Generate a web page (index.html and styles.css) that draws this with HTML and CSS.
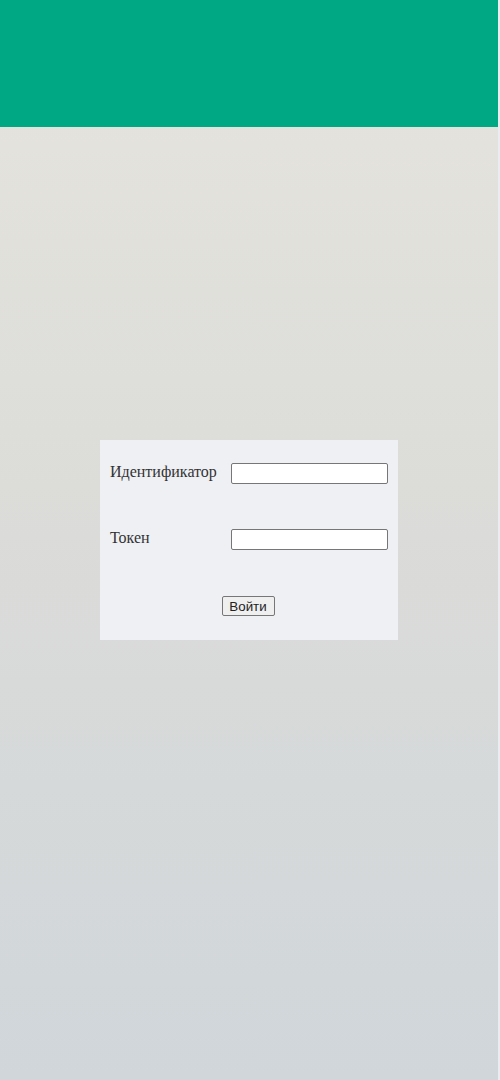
FILE: index.html
```html
<!DOCTYPE html>
<html lang="ru">
<head>
<meta charset="utf-8">
<title>Вход</title>
<link rel="stylesheet" href="styles.css">
</head>
<body>
<div class="page">
  <header class="topbar"></header>
  <main class="main">
    <form class="login">
      <div class="fields">
        <label class="label" for="ident">Идентификатор</label>
        <input class="input" id="ident" type="text">
        <label class="label" for="token">Токен</label>
        <input class="input" id="token" type="text">
      </div>
      <div class="actions">
        <button class="btn" type="button">Войти</button>
      </div>
    </form>
  </main>
</div>
</body>
</html>
```
FILE: styles.css
```css
html, body {
  margin: 0;
  padding: 0;
  height: 100%;
  background: #e9edf2;
}
body {
  font-family: "Liberation Serif", "Times New Roman", serif;
  font-size: 16px;
  color: #333;
}
.page {
  width: 498px;
  height: 1080px;
  display: flex;
  flex-direction: column;
  background: linear-gradient(to bottom, #e6e5de 0%, #dcdcd9 45%, #d0d6da 100%);
}
.topbar {
  height: 127px;
  flex: none;
  background: #00a884;
}
.main {
  flex: 1;
  display: flex;
  flex-direction: column;
  align-items: center;
  padding-top: 313px;
}
.login {
  width: 298px;
  box-sizing: border-box;
  padding: 23px 10px 24px 10px;
  background: #eff0f3;
}
.fields {
  display: grid;
  grid-template-columns: 121px 157px;
  row-gap: 45px;
  align-items: start;
}
.label {
  line-height: 18px;
}
.input {
  box-sizing: border-box;
  width: 157px;
  height: 21px;
  margin: 0;
  border: 1px solid #767676;
  border-radius: 2px;
  background: #fff;
  padding: 1px 2px;
}
.actions {
  margin-top: 46px;
  display: flex;
  justify-content: center;
  padding-right: 2px;
}
.btn {
  box-sizing: border-box;
  width: 53px;
  height: 20px;
  margin: 0;
  padding: 0 6px;
  font-family: "Liberation Sans", Arial, sans-serif;
  font-size: 13.33px;
  color: #222;
  background: #efefef;
  border: 1px solid #767676;
  border-radius: 2px;
}
```
